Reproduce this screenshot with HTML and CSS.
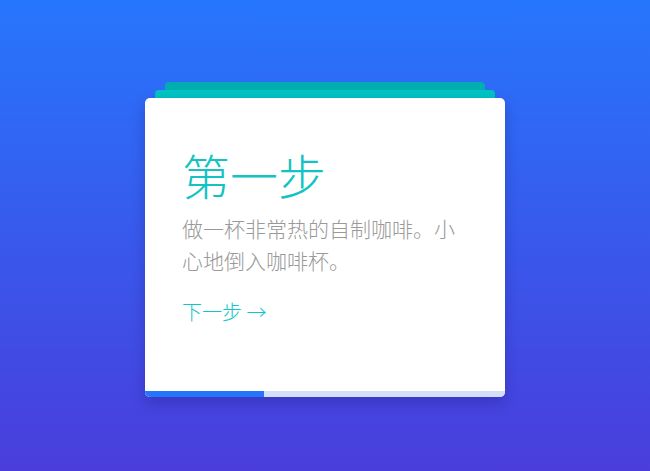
FILE: index.html
```html
<!DOCTYPE html>
<html lang="zh">
<head>
<meta charset="UTF-8" />
<meta name="viewport" content="width=device-width, initial-scale=1.0" />
<title>第一步</title>
<link rel="stylesheet" href="styles.css">
</head>
<body>
  <div class="stack">
    <div class="card">
      <div class="card-body">
        <h1 class="step-title">第一步</h1>
        <p class="step-text">做一杯非常热的自制咖啡。小心地倒入咖啡杯。</p>
        <a class="next" href="#">下一步 →</a>
      </div>
      <div class="progress">
        <div class="progress-fill" style="width:33%"></div>
      </div>
    </div>
  </div>
</body>
</html>
```

FILE: styles.css
```css
html, body {
  height: 100%;
}
body {
  margin: 0;
  font-family: "Noto Sans CJK SC", "Noto Sans", sans-serif;
  background: linear-gradient(to bottom, #2676fc, #4a3ddc);
  display: flex;
  justify-content: center;
  align-items: center;
}
.stack {
  position: relative;
  width: 360px;
  padding-top: 16px;
  margin-top: 8px;
}
.stack::before,
.stack::after {
  content: "";
  position: absolute;
  height: 20px;
  border-radius: 4px;
}
.stack::before {
  top: 0;
  left: 20px;
  right: 20px;
  background: #00aeb2;
}
.stack::after {
  top: 8px;
  left: 10px;
  right: 10px;
  background: #00c3c3;
}
.card {
  position: relative;
  z-index: 1;
  background: #fff;
  border-radius: 5px;
  overflow: hidden;
  box-shadow: 0 6px 14px rgba(20, 10, 90, 0.25);
}
.card-body {
  height: 293px;
  padding: 52px 37px 0;
  box-sizing: border-box;
}
.step-title {
  margin: 0;
  font-size: 48px;
  line-height: 48px;
  font-weight: 300;
  color: #13c3c3;
}
.step-text {
  margin: 14px 0 0;
  font-size: 21px;
  line-height: 32px;
  font-weight: 300;
  color: #999;
}
.next {
  display: inline-block;
  margin-top: 21px;
  font-size: 20px;
  line-height: 30px;
  font-weight: 300;
  color: #10c6cc;
  text-decoration: none;
}
.progress {
  height: 6px;
  background: #d3e0fa;
}
.progress-fill {
  height: 100%;
  background: #2575fc;
}
```
